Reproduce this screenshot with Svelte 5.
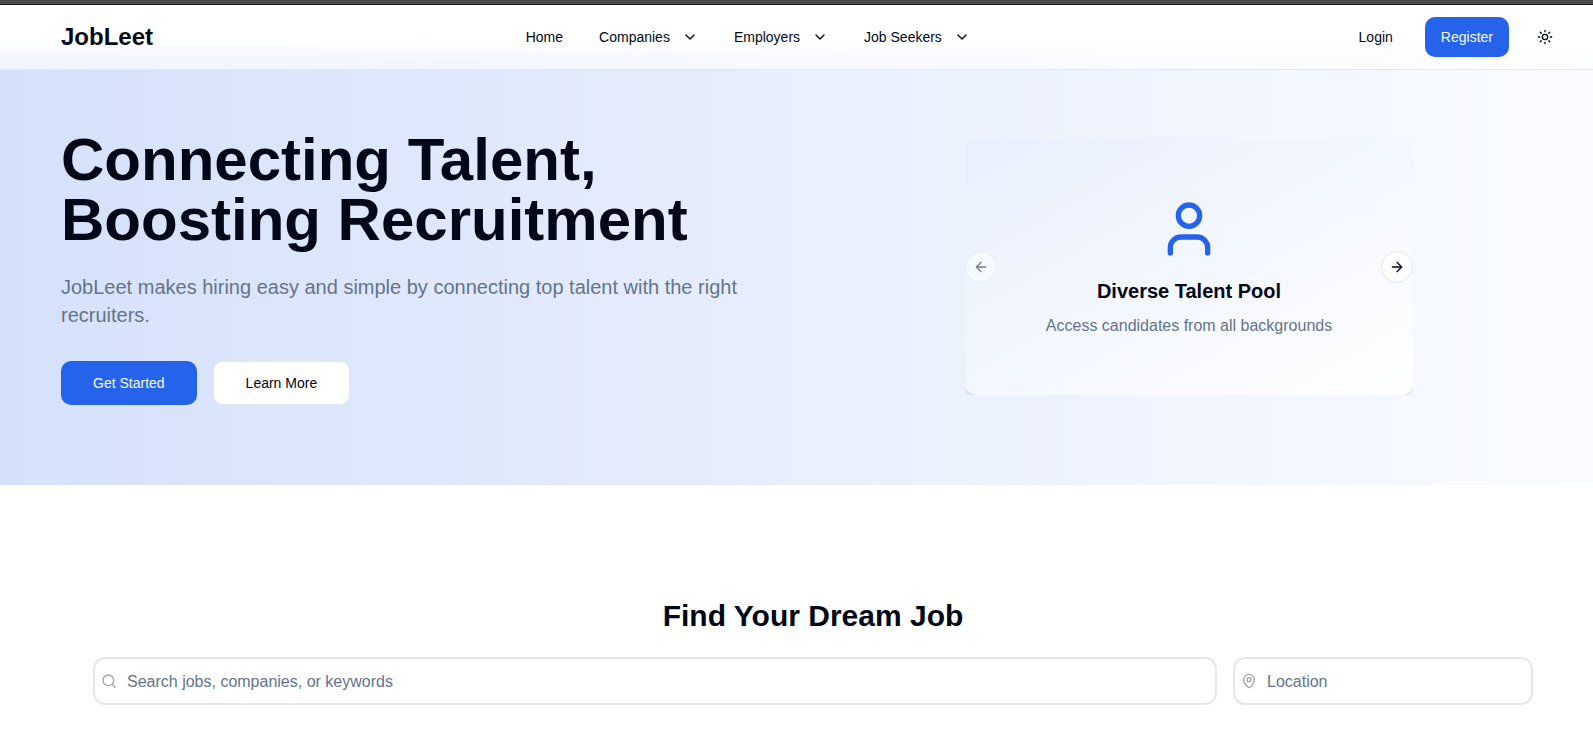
<script>
  const menus = ['Companies', 'Employers', 'Job Seekers'];
</script>

<div class="page">
  <div class="strip"></div>

  <header>
    <div class="bar">
      <a class="brand" href="#home">JobLeet</a>
      <nav aria-label="Main">
        <a class="item" href="#home">Home</a>
        {#each menus as menu}
          <button class="item" type="button" aria-haspopup="true">
            {menu}
            <svg class="icon" viewBox="0 0 24 24" aria-hidden="true"><path d="m6 9 6 6 6-6" /></svg>
          </button>
        {/each}
      </nav>
      <div class="account">
        <a class="item" href="#login">Login</a>
        <a class="item primary" href="#register">Register</a>
        <button class="theme" type="button" aria-label="Toggle theme">
          <svg class="icon" viewBox="0 0 24 24" aria-hidden="true">
            <circle cx="12" cy="12" r="4" />
            <path d="M12 2v2M12 20v2M4.93 4.93l1.41 1.41M17.66 17.66l1.41 1.41M2 12h2M20 12h2M6.34 17.66l-1.41 1.41M19.07 4.93l-1.41 1.41" />
          </svg>
        </button>
      </div>
    </div>
  </header>

  <main>
    <section class="hero">
      <div class="columns">
        <div class="intro">
          <h1>Connecting Talent, Boosting Recruitment</h1>
          <p>JobLeet makes hiring easy and simple by connecting top talent with the right recruiters.</p>
          <div class="actions">
            <a class="item large primary" href="#start">Get Started</a>
            <a class="item large outline" href="#more">Learn More</a>
          </div>
        </div>

        <div class="carousel">
          <article>
            <svg class="person" viewBox="0 0 24 24" aria-hidden="true">
              <path d="M19 21v-2a4 4 0 0 0-4-4H9a4 4 0 0 0-4 4v2" />
              <circle cx="12" cy="7" r="4" />
            </svg>
            <h3>Diverse Talent Pool</h3>
            <p>Access candidates from all backgrounds</p>
          </article>
          <button class="arrow previous" type="button" aria-label="Previous slide" disabled>
            <svg class="icon" viewBox="0 0 24 24" aria-hidden="true"><path d="m12 19-7-7 7-7M19 12H5" /></svg>
          </button>
          <button class="arrow next" type="button" aria-label="Next slide">
            <svg class="icon" viewBox="0 0 24 24" aria-hidden="true"><path d="M5 12h14M12 5l7 7-7 7" /></svg>
          </button>
        </div>
      </div>
    </section>

    <section class="search">
      <div class="finder">
        <h2>Find Your Dream Job</h2>
        <form>
          <label class="field">
            <svg class="icon" viewBox="0 0 24 24" aria-hidden="true">
              <circle cx="11" cy="11" r="8" /><path d="m21 21-4.3-4.3" />
            </svg>
            <input type="text" aria-label="Search jobs" placeholder="Search jobs, companies, or keywords" />
          </label>
          <label class="field">
            <svg class="icon" viewBox="0 0 24 24" aria-hidden="true">
              <path d="M20 10c0 4.993-5.539 10.193-7.399 11.799a1 1 0 0 1-1.202 0C9.539 20.193 4 14.993 4 10a8 8 0 0 1 16 0" />
              <circle cx="12" cy="10" r="3" />
            </svg>
            <input type="text" aria-label="Job location" placeholder="Location" />
          </label>
        </form>
      </div>
    </section>
  </main>
</div>

<style>
  :global(body) {
    margin: 0;
    background: #fff;
  }

  .page {
    --ink: #020817;
    --muted: #64748b;
    --blue: #2563eb;
    --line: #e2e8f0;
    color: var(--ink);
    font: 16px/24px "Liberation Sans", Arial, sans-serif;
  }

  .page :is(h1, h2, h3, p) {
    margin: 0;
  }

  .page * {
    box-sizing: border-box;
  }

  a {
    color: inherit;
    text-decoration: none;
  }

  button,
  input {
    font: inherit;
    color: inherit;
  }

  .icon {
    width: 16px;
    height: 16px;
    flex: none;
  }

  .icon,
  .person {
    fill: none;
    stroke: currentColor;
    stroke-width: 2;
    stroke-linecap: round;
    stroke-linejoin: round;
  }

  .strip {
    height: 5px;
    background: #4a4a4a;
    border-bottom: 1px solid #1a1a1a;
  }

  header,
  .hero,
  .search {
    padding-left: 1px;
  }

  header {
    position: sticky;
    top: 0;
    z-index: 10;
    background: linear-gradient(
      to bottom,
      #fff 54%,
      rgba(255, 255, 255, 0.9) 66%,
      rgba(255, 255, 255, 0.68) 84%,
      rgba(255, 255, 255, 0.6)
    );
    border-bottom: 1px solid var(--line);
  }

  .bar {
    display: flex;
    align-items: center;
    justify-content: space-between;
    max-width: 1536px;
    height: 64px;
    margin: 0 auto;
    padding-left: 32px;
  }

  .brand {
    font-size: 24px;
    line-height: 32px;
    font-weight: 700;
  }

  nav,
  .account,
  .actions {
    display: flex;
    align-items: center;
  }

  nav {
    gap: 4px;
  }

  .account,
  .actions {
    gap: 16px;
  }

  .item {
    display: inline-flex;
    align-items: center;
    justify-content: center;
    gap: 12px;
    height: 40px;
    padding: 0 16px;
    border: 0;
    border-radius: 10px;
    background: none;
    font-size: 14px;
    line-height: 20px;
    white-space: nowrap;
  }

  .primary {
    background: var(--blue);
    color: #f8fafc;
  }

  .large {
    height: 44px;
    padding: 0 32px;
  }

  .outline {
    border: 1px solid var(--line);
    background: #fff;
  }

  .theme {
    display: grid;
    place-items: center;
    width: 40px;
    height: 40px;
    padding: 0;
    border: 0;
    background: none;
  }

  /* The hero runs up behind the translucent header. */
  .hero {
    margin-top: -65px;
    padding-top: 125px;
    padding-bottom: 80px;
    background: linear-gradient(to right, #d5e1fb, #fafcff);
  }

  .columns {
    display: grid;
    grid-template-columns: 1fr 1fr;
    align-items: center;
    gap: 96px;
    max-width: 1536px;
    margin: 0 auto;
    padding: 0 32px;
  }

  h1 {
    font-size: 60px;
    line-height: 60px;
  }

  .intro p {
    margin: 23px 0 32px;
    color: var(--muted);
    font-size: 20px;
    line-height: 28px;
  }

  .carousel {
    position: relative;
    justify-self: center;
    width: 100%;
    max-width: 448px;
    margin-bottom: 1px;
    overflow: hidden;
  }

  article {
    display: flex;
    flex-direction: column;
    align-items: center;
    justify-content: center;
    min-height: 256px;
    border-radius: 12px;
    background: linear-gradient(to bottom right, #e8effd, #fff);
    box-shadow: 0 10px 15px -3px rgba(0, 0, 0, 0.1), 0 4px 6px -4px rgba(0, 0, 0, 0.1);
    text-align: center;
  }

  .person {
    width: 64px;
    height: 64px;
    color: var(--blue);
  }

  h3 {
    padding: 16px 0 9px;
    font-size: 20px;
    line-height: 28px;
  }

  article p {
    color: var(--muted);
  }

  .arrow {
    position: absolute;
    top: 50%;
    display: grid;
    place-items: center;
    width: 32px;
    height: 32px;
    margin-top: -16px;
    padding: 0;
    border: 1px solid var(--line);
    border-radius: 50%;
    background: #fff;
    color: var(--ink);
  }

  .arrow:disabled {
    opacity: 0.5;
  }

  .previous {
    left: 0;
  }

  .next {
    right: 0;
  }

  .finder {
    max-width: 1536px;
    margin: 0 auto;
    padding: 113px 32px 24px 64px;
  }

  h2 {
    font-size: 30px;
    line-height: 36px;
    text-align: center;
  }

  form {
    display: grid;
    grid-template-columns: 1fr 300px;
    gap: 16px;
    margin-top: 23px;
  }

  .field {
    display: flex;
    align-items: center;
    gap: 10px;
    height: 48px;
    padding: 0 6px;
    border: 2px solid #e5e7eb;
    border-radius: 12px;
    background: #fff;
  }

  .field .icon {
    color: #9ca3af;
  }

  input {
    flex: 1;
    min-width: 0;
    padding: 2px 0 0;
    border: 0;
    outline: 0;
    background: none;
  }

  input::placeholder {
    color: var(--muted);
    opacity: 1;
  }
</style>
